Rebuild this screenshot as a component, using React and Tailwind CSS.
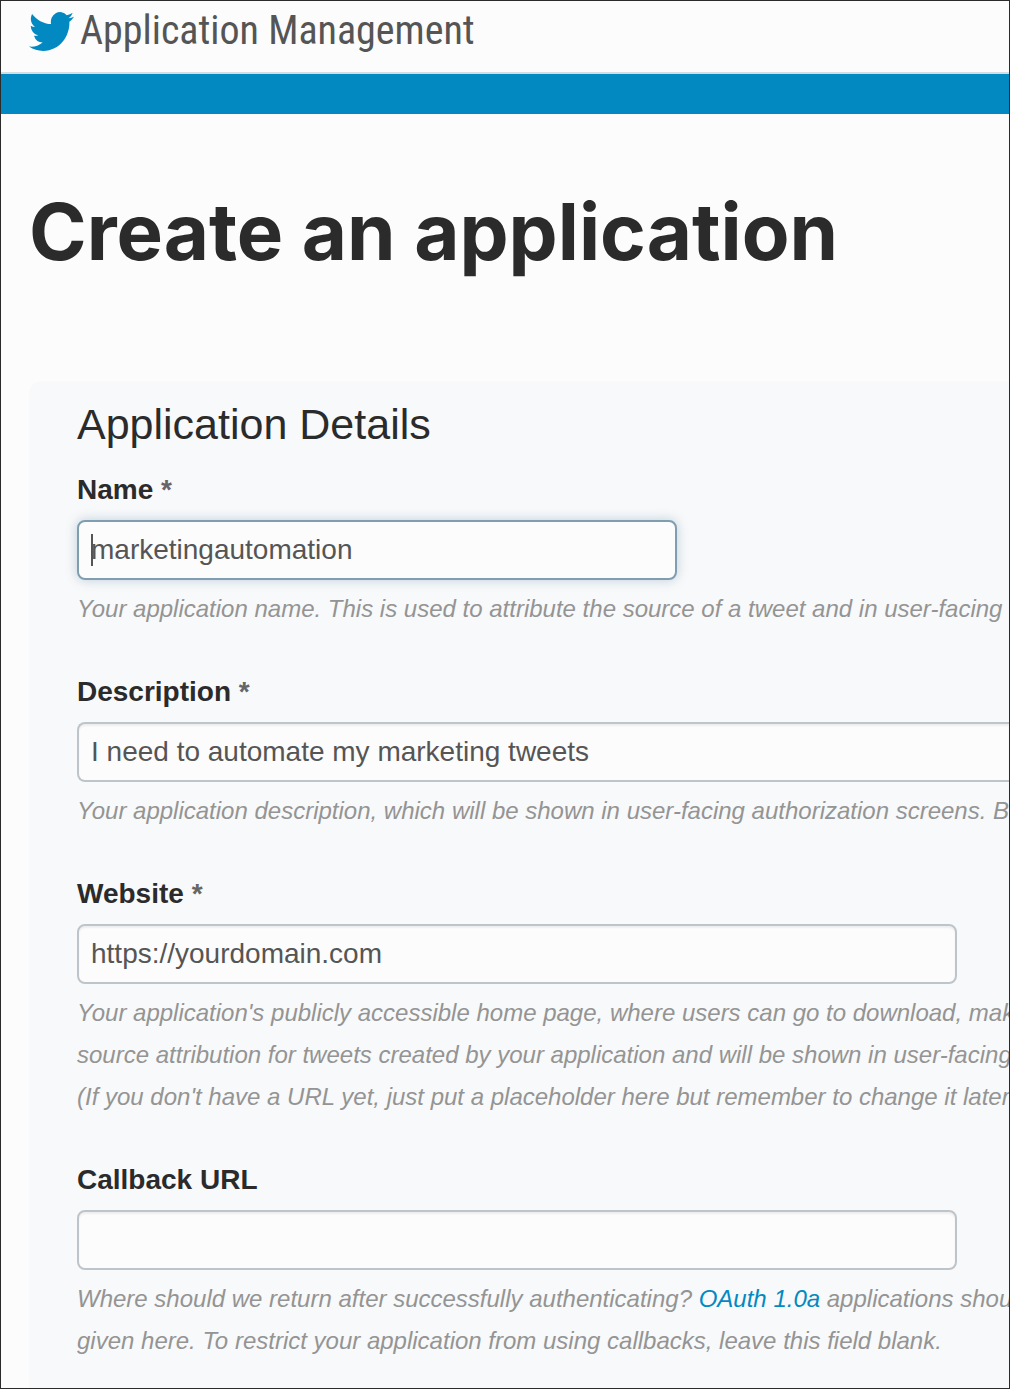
const inputBase =
  'block h-[60px] w-full border-2 border-[#bdc4ca] bg-[#fcfcfc] px-3 text-[28px] text-[#555] shadow-[inset_0_2px_2px_rgba(0,0,0,0.06)] outline-none';

function TwitterBird() {
  return (
    <svg
      viewBox="0 2.2 24 19.6"
      preserveAspectRatio="none"
      className="h-[39px] w-[45px] shrink-0"
      fill="#0389c2"
      aria-label="Twitter"
      role="img"
    >
      <path d="M23.953 4.57a10 10 0 01-2.825.775 4.958 4.958 0 002.163-2.723c-.951.555-2.005.959-3.127 1.184a4.92 4.92 0 00-8.384 4.482C7.69 8.095 4.067 6.13 1.64 3.162a4.822 4.822 0 00-.666 2.475c0 1.71.87 3.213 2.188 4.096a4.904 4.904 0 01-2.228-.616v.06a4.923 4.923 0 003.946 4.827 4.996 4.996 0 01-2.212.085 4.936 4.936 0 004.604 3.417 9.867 9.867 0 01-6.102 2.105c-.39 0-.779-.023-1.17-.067a13.995 13.995 0 007.557 2.209c9.053 0 13.998-7.496 13.998-13.985 0-.21 0-.42-.015-.63A9.935 9.935 0 0024 4.59z" />
    </svg>
  );
}

function Field({ id, label, required, help, children }) {
  return (
    <div>
      <label htmlFor={id} className="mb-[10px] block text-[28px] leading-10 font-bold text-[#2b2b2b]">
        {label}
        {required && <span className="text-[#666]"> *</span>}
      </label>
      {children}
      <div id={id + '-help'} className="mt-2 text-[24px] leading-[42px] whitespace-nowrap text-[#949494] italic">
        {help}
      </div>
    </div>
  );
}

export default function App() {
  return (
    <div className="flex min-h-screen flex-col overflow-hidden border border-[#2b2b2b] bg-[#fcfcfc] font-['Liberation_Sans',Arial,sans-serif]">
      <header className="flex h-[73px] items-start gap-[6px] border-b-2 border-[#d3dde4] pt-[11px] pl-[28px]">
        <TwitterBird />
        <span className="-mt-[5px] font-['Roboto_Condensed','Roboto',sans-serif] text-[40px] leading-[48px] whitespace-nowrap text-[#555]">
          Application Management
        </span>
      </header>
      <div className="h-10 shrink-0 bg-[#0389c2]" />

      <main className="flex flex-1 flex-col pl-[28px]">
        <h1 className="mt-[68px] mb-[99px] font-['Inter',sans-serif] text-[78px] leading-[100px] font-bold whitespace-nowrap text-[#2b2b2b]">
          Create an application
        </h1>

        <form className="flex-1 rounded-tl-xl bg-[#f8f9fa] pt-[13px] pb-[26px] pl-12">
          <h2 className="mb-4 text-[43px] leading-[60px] text-[#2b2b2b]">Application Details</h2>

          <div className="flex flex-col gap-[42px]">
            <Field
              id="name"
              label="Name"
              required
              help="Your application name. This is used to attribute the source of a tweet and in user-facing"
            >
              <div className="relative max-w-[600px]">
                <input
                  id="name"
                  type="text"
                  defaultValue="marketingautomation"
                  aria-describedby="name-help"
                  className="block h-[60px] w-full rounded-lg border-2 border-[#7f9fb0] bg-[#fcfcfc] px-3 text-[28px] text-[#555] shadow-[0_0_12px_rgba(60,110,150,0.3)] outline-none"
                />
                <span className="absolute top-[14px] left-[14px] h-8 w-[2px] bg-[#555]" />
              </div>
            </Field>

            <Field
              id="description"
              label="Description"
              required
              help="Your application description, which will be shown in user-facing authorization screens. Between"
            >
              <input
                id="description"
                type="text"
                defaultValue="I need to automate my marketing tweets"
                aria-describedby="description-help"
                className={inputBase + ' rounded-l-lg border-r-0'}
              />
            </Field>

            <Field
              id="website"
              label="Website"
              required
              help={
                <>
                  Your application's publicly accessible home page, where users can go to download, make
                  <br />
                  source attribution for tweets created by your application and will be shown in user-facing
                  <br />
                  (If you don't have a URL yet, just put a placeholder here but remember to change it later.)
                </>
              }
            >
              <input
                id="website"
                type="text"
                defaultValue="https://yourdomain.com"
                aria-describedby="website-help"
                className={inputBase + ' max-w-[880px] rounded-lg'}
              />
            </Field>

            <Field
              id="callback"
              label="Callback URL"
              help={
                <>
                  Where should we return after successfully authenticating?{' '}
                  <a href="#oauth" className="text-[#0389c2]">
                    OAuth 1.0a
                  </a>{' '}
                  applications should
                  <br />
                  given here. To restrict your application from using callbacks, leave this field blank.
                </>
              }
            >
              <input
                id="callback"
                type="text"
                aria-describedby="callback-help"
                className={inputBase + ' max-w-[880px] rounded-lg'}
              />
            </Field>
          </div>
        </form>
      </main>
    </div>
  );
}
